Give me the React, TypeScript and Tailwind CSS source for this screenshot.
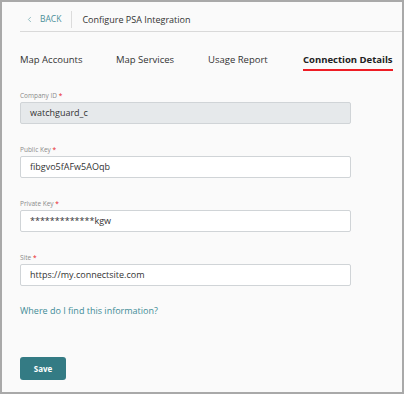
import { ChevronLeft } from 'lucide-react';

const fields = [
  { label: 'Company ID', value: 'watchguard_c', disabled: true },
  { label: 'Public Key', value: 'fibgvo5fAFw5AOqb' },
  { label: 'Private Key', value: '*************kgw' },
  { label: 'Site', value: 'https://my.connectsite.com' },
];

const tabs = [
  { name: 'Map Accounts', w: 'w-[96px]' },
  { name: 'Map Services', w: 'w-[92px]' },
  { name: 'Usage Report', w: 'w-[95px]' },
  { name: 'Connection Details', w: 'w-auto', active: true },
];

export default function App() {
  return (
    <div className="w-[404px] h-[394px] border-2 border-[#a9a9a9] bg-[#fafafa] pl-[18px] font-['Open_Sans',sans-serif] text-[#333]">
      {/* Header */}
      <div className="flex items-center h-[30px] pt-[6px] border-b border-[#d9d9d9]">
        <div className="flex items-center gap-[6px] text-[#4a9099] text-[8.5px] pl-[5px] pr-[10px]">
          <ChevronLeft className="w-[9px] h-[9px]" strokeWidth={1.5} />
          <span>BACK</span>
        </div>
        <div className="w-px h-[17px] bg-[#dcdcdc]" />
        <span className="pl-[10px] text-[9px] text-[#333]">Configure PSA Integration</span>
      </div>

      {/* Tabs */}
      <div className="flex items-end h-[39px] text-[9.5px] whitespace-nowrap">
        {tabs.map((t) => (
          <div
            key={t.name}
            className={
              t.active
                ? 'pb-[2px] font-bold border-b-2 border-[#ee1c24] text-[#222]'
                : 'pb-[4px] text-[#333] ' + t.w
            }
          >
            {t.name}
          </div>
        ))}
      </div>

      {/* Form */}
      <div className="flex flex-col gap-[20px] mt-[19px] w-[331px]">
        {fields.map((f) => (
          <div key={f.label} className="flex flex-col">
            <label className="text-[6.5px] text-[#8a8a8a] leading-[11px] mb-[1px]">
              {f.label} <span className="text-[#e8161c]">*</span>
            </label>
            <div
              className={
                f.disabled
                  ? 'h-[22px] flex items-center px-[9px] text-[9px] border border-[#d0d4d7] rounded-[2px] bg-[#e6e9eb] text-[#333]'
                  : 'h-[22px] flex items-center px-[9px] text-[9px] border border-[#d0d4d7] rounded-[2px] bg-white text-[#333]'
              }
            >
              {f.value}
            </div>
          </div>
        ))}
      </div>

      <div className="mt-[18px] text-[9px] leading-[13px] text-[#3f8c97]">Where do I find this information?</div>

      <button className="mt-[40px] w-[46px] h-[23px] rounded-[3px] bg-[#347b84] text-white text-[8px] font-bold">
        Save
      </button>
    </div>
  );
}
